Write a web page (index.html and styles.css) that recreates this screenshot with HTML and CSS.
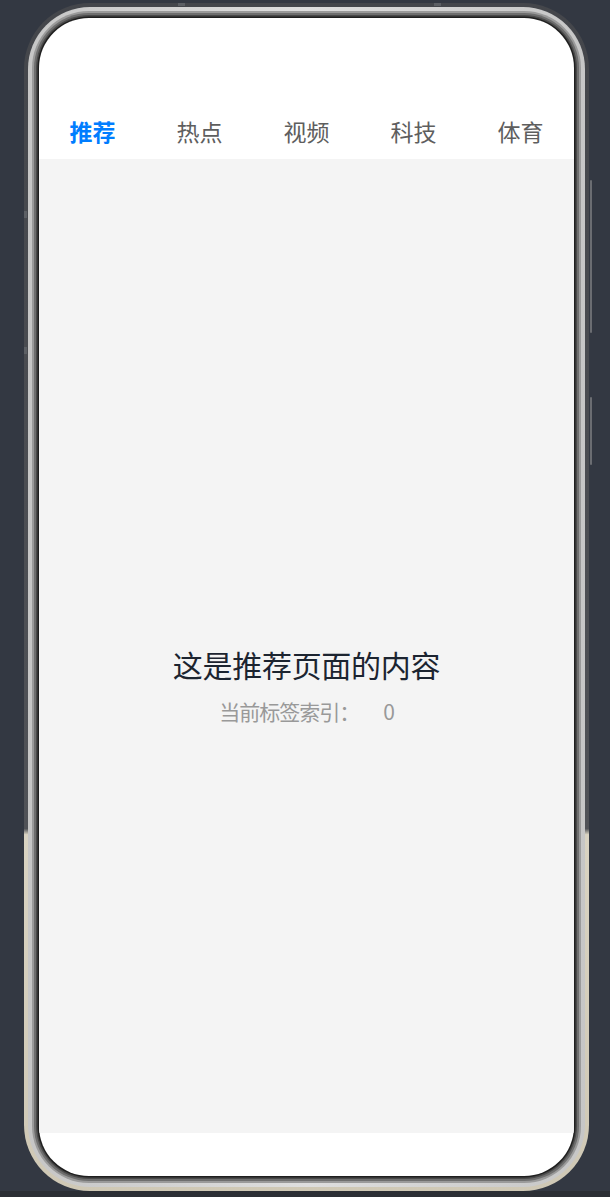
FILE: index.html
```html
<!DOCTYPE html>
<html lang="zh">
<head>
<meta charset="utf-8">
<title>Tabs</title>
<link rel="stylesheet" href="styles.css">
</head>
<body>
<div class="stage">
  <div class="phone">
    <span class="btn btn-power"></span>
    <span class="btn btn-vol"></span>
    <span class="nub nub-l1"></span>
    <span class="nub nub-l2"></span>
    <span class="nub nub-t1"></span>
    <span class="nub nub-t2"></span>
    <div class="bezel">
      <div class="screen">
        <div class="status"></div>
        <nav class="tabs">
          <div class="tab active">推荐</div>
          <div class="tab">热点</div>
          <div class="tab">视频</div>
          <div class="tab">科技</div>
          <div class="tab">体育</div>
        </nav>
        <main class="content">
          <div class="title">这是推荐页面的内容</div>
          <div class="sub">当前标签索引：<span class="idx">0</span></div>
        </main>
        <div class="bottom"></div>
      </div>
    </div>
  </div>
</div>
<div class="floor"></div>
</body>
</html>
```

FILE: styles.css
```css
html, body {
  margin: 0;
  padding: 0;
}
body {
  background: #333842;
  width: 610px;
  height: 1197px;
  overflow: hidden;
  font-family: "Noto Sans CJK SC", "Noto Sans", sans-serif;
}
.stage {
  height: 1191px;
  padding: 3px 0 0 24px;
  box-sizing: border-box;
}
.phone {
  position: relative;
  width: 565px;
  height: 1188px;
  box-sizing: border-box;
  border-radius: 66px;
  padding: 4px;
  background: linear-gradient(180deg, #44464b 0%, #505257 69.5%, #d9d3c2 70%, #cfc8b5 100%);
}
.bezel {
  height: 100%;
  box-sizing: border-box;
  border-radius: 62px;
  padding: 11px;
  background: linear-gradient(90deg, #c6c6c6, #dedede 50%, #c6c6c6);
}
.screen {
  height: 100%;
  border-radius: 50px;
  overflow: hidden;
  background: #ffffff;
  display: flex;
  flex-direction: column;
  box-shadow: 0 0 0 1.5px #1f1f1f, 0 0 0 3px #4a4a4a, 0 0 0 5px #6e6e6e, 0 0 0 7px #9a9a9a;
}
.status {
  height: 84px;
  flex: none;
}
.tabs {
  height: 57px;
  flex: none;
  display: flex;
  align-items: center;
}
.tab {
  flex: 1;
  text-align: center;
  font-size: 23px;
  line-height: 30px;
  color: #5e5e5e;
}
.tab.active {
  color: #007dff;
  font-weight: 700;
}
.content {
  flex: 1;
  background: #f4f4f4;
  display: flex;
  flex-direction: column;
  align-items: center;
  padding-top: 485px;
  box-sizing: border-box;
}
.title {
  font-size: 30px;
  line-height: 40px;
  letter-spacing: -0.3px;
  color: #1c2430;
}
.sub {
  margin-top: 13px;
  font-size: 21px;
  line-height: 28px;
  letter-spacing: -1px;
  color: #999999;
  display: flex;
}
.idx {
  margin-left: 24px;
}
.bottom {
  height: 43px;
  flex: none;
}
.btn {
  position: absolute;
  right: -3px;
  width: 2px;
  background: #6b6d72;
  border-radius: 1px;
}
.btn-power { top: 177px; height: 153px; }
.btn-vol { top: 394px; height: 68px; }
.nub {
  position: absolute;
  background: #5c5f64;
}
.nub-l1 { left: 0; top: 208px; width: 3px; height: 7px; }
.nub-l2 { left: 0; top: 344px; width: 3px; height: 7px; }
.nub-t1 { top: 0; left: 154px; width: 7px; height: 3px; }
.nub-t2 { top: 0; left: 410px; width: 7px; height: 3px; }
.floor {
  height: 6px;
  background: #2b2e34;
}
```
